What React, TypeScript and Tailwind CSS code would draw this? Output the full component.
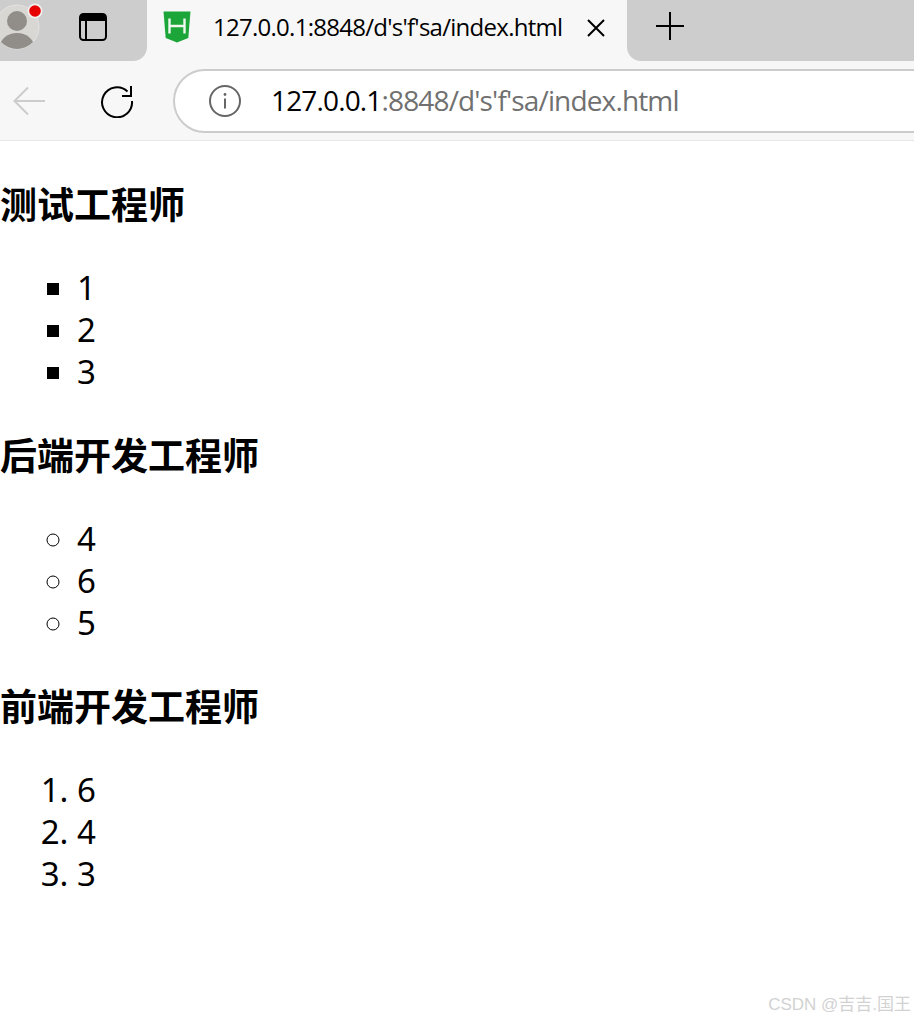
const uiFont = { fontFamily: '"Open Sans", "Noto Sans", sans-serif' };

function Avatar() {
  return (
    <svg width="60" height="61" viewBox="0 0 60 61" className="block">
      <defs>
        <clipPath id="face">
          <circle cx="17" cy="27" r="22" />
        </clipPath>
      </defs>
      <circle cx="17" cy="27" r="22" fill="#d8d7d4" stroke="#e4e3e1" strokeWidth="1" />
      <g clipPath="url(#face)">
        <circle cx="17" cy="21" r="10" fill="#918e8a" />
        <ellipse cx="17" cy="47" rx="17" ry="14" fill="#918e8a" />
      </g>
      <circle cx="35" cy="11" r="7.5" fill="#f1f0ef" />
      <circle cx="35" cy="11" r="5.8" fill="#e60000" />
    </svg>
  );
}

function PanelIcon() {
  return (
    <svg width="28" height="28" viewBox="0 0 28 28" className="block">
      <rect x="1" y="1" width="26" height="26" rx="3.5" fill="none" stroke="#000" strokeWidth="2" />
      <path d="M1 4.5A3.5 3.5 0 0 1 4.5 1h19A3.5 3.5 0 0 1 27 4.5V8H1z" fill="#000" />
      <path d="M7 8v19" stroke="#000" strokeWidth="2" />
    </svg>
  );
}

function HBuilderLogo() {
  return (
    <svg width="28" height="32" viewBox="0 0 28 32" className="block">
      <path d="M0.5 0.5h27l-2.2 26.5-11.3 4.5-11.3-4.5z" fill="#1ca538" />
      <path d="M6.5 7.5v15M21.5 7.5v15M6.5 15h15" fill="none" stroke="#eef8ef" strokeWidth="2.4" />
    </svg>
  );
}

function BackIcon() {
  return (
    <svg width="34" height="30" viewBox="0 0 34 30" className="block">
      <path d="M33 15H3M16 1.5 2.5 15 16 28.5" fill="none" stroke="#cccccc" strokeWidth="2" />
    </svg>
  );
}

function ReloadIcon() {
  return (
    <svg width="34" height="34" viewBox="0 0 34 34" className="block">
      <path d="M27.5 7.5A15 15 0 1 0 32 17" fill="none" stroke="#000" strokeWidth="2" />
      <path d="M31 2v10H22" fill="none" stroke="#000" strokeWidth="2" />
    </svg>
  );
}

function InfoIcon() {
  return (
    <svg width="32" height="32" viewBox="0 0 32 32" className="block">
      <circle cx="16" cy="16" r="15" fill="none" stroke="#666" strokeWidth="2" />
      <path d="M16 13.5v10" stroke="#666" strokeWidth="2" />
      <circle cx="16" cy="9.5" r="1.4" fill="#666" />
    </svg>
  );
}

function CloseIcon() {
  return (
    <svg width="18" height="18" viewBox="0 0 18 18" className="block">
      <path d="M1 1l16 16M17 1 1 17" stroke="#000" strokeWidth="2" />
    </svg>
  );
}

function PlusIcon() {
  return (
    <svg width="28" height="28" viewBox="0 0 28 28" className="block">
      <path d="M14 0v28M0 14h28" stroke="#000" strokeWidth="2" />
    </svg>
  );
}

function BrowserChrome() {
  return (
    <div className="bg-[#f7f7f7] border-b border-[#e6e6e6] h-[141px]">
      <div className="flex h-[61px]">
        <div className="w-[147px] bg-[#cdcdcd] rounded-br-[14px] flex items-start">
          <Avatar />
          <div className="ml-[19px] mt-[13px]">
            <PanelIcon />
          </div>
        </div>
        <div className="w-[480px] flex items-start pl-[16px]">
          <div className="mt-[11px]">
            <HBuilderLogo />
          </div>
          <span className="ml-[22px] mt-[11px] text-[24px] leading-[32px] tracking-[-0.73px] text-black whitespace-nowrap" style={uiFont}>
            127.0.0.1:8848/d's'f'sa/index.html
          </span>
          <div className="ml-auto mr-[22px] mt-[19px]">
            <CloseIcon />
          </div>
        </div>
        <div className="flex-1 bg-[#cdcdcd] rounded-bl-[14px] pl-[29px] pt-[12px]">
          <PlusIcon />
        </div>
      </div>
      <div className="flex items-center h-[79px]">
        <div className="ml-[12px]">
          <BackIcon />
        </div>
        <div className="ml-[54px]">
          <ReloadIcon />
        </div>
        <div className="ml-[39px] mr-[-60px] flex-1 h-[64px] mt-[1px] bg-white border-2 border-[#cccccc] rounded-l-[32px] flex items-center pl-[34px]">
          <InfoIcon />
          <span className="ml-[30px] mb-[2px] text-[28px] leading-[36px] tracking-[-0.85px] text-black whitespace-nowrap" style={uiFont}>
            127.0.0.1<span className="text-[#707070]">:8848/d's'f'sa/index.html</span>
          </span>
        </div>
      </div>
    </div>
  );
}

export default function App() {
  return (
    <div className="relative h-[1020px] w-[914px] overflow-hidden bg-white text-black font-['Noto_Sans','Noto_Sans_CJK_SC',sans-serif]">
      <BrowserChrome />

      <div className="pt-[38px]">
        <h2 className="text-[37px] leading-[48px] font-bold font-['Noto_Sans_CJK_SC',sans-serif]">测试工程师</h2>
        <ul className="list-[square] pl-[77px] mt-[40px] text-[33px] leading-[42px]">
          <li>1</li>
          <li>2</li>
          <li>3</li>
        </ul>
        <h2 className="mt-[37px] text-[37px] leading-[48px] font-bold font-['Noto_Sans_CJK_SC',sans-serif]">后端开发工程师</h2>
        <ul className="list-[circle] pl-[77px] mt-[40px] text-[33px] leading-[42px]">
          <li>4</li>
          <li>6</li>
          <li>5</li>
        </ul>
        <h2 className="mt-[37px] text-[37px] leading-[48px] font-bold font-['Noto_Sans_CJK_SC',sans-serif]">前端开发工程师</h2>
        <ol className="list-decimal pl-[77px] mt-[40px] text-[33px] leading-[42px]">
          <li>6</li>
          <li>4</li>
          <li>3</li>
        </ol>
      </div>

      {/* 워터마크 */}
      <span className="absolute right-[3px] bottom-[4px] text-[17px] leading-[22px] text-[#d2d2d2] font-['Liberation_Sans','Noto_Sans_CJK_SC',sans-serif]">
        CSDN @吉吉.国王
      </span>
    </div>
  );
}
